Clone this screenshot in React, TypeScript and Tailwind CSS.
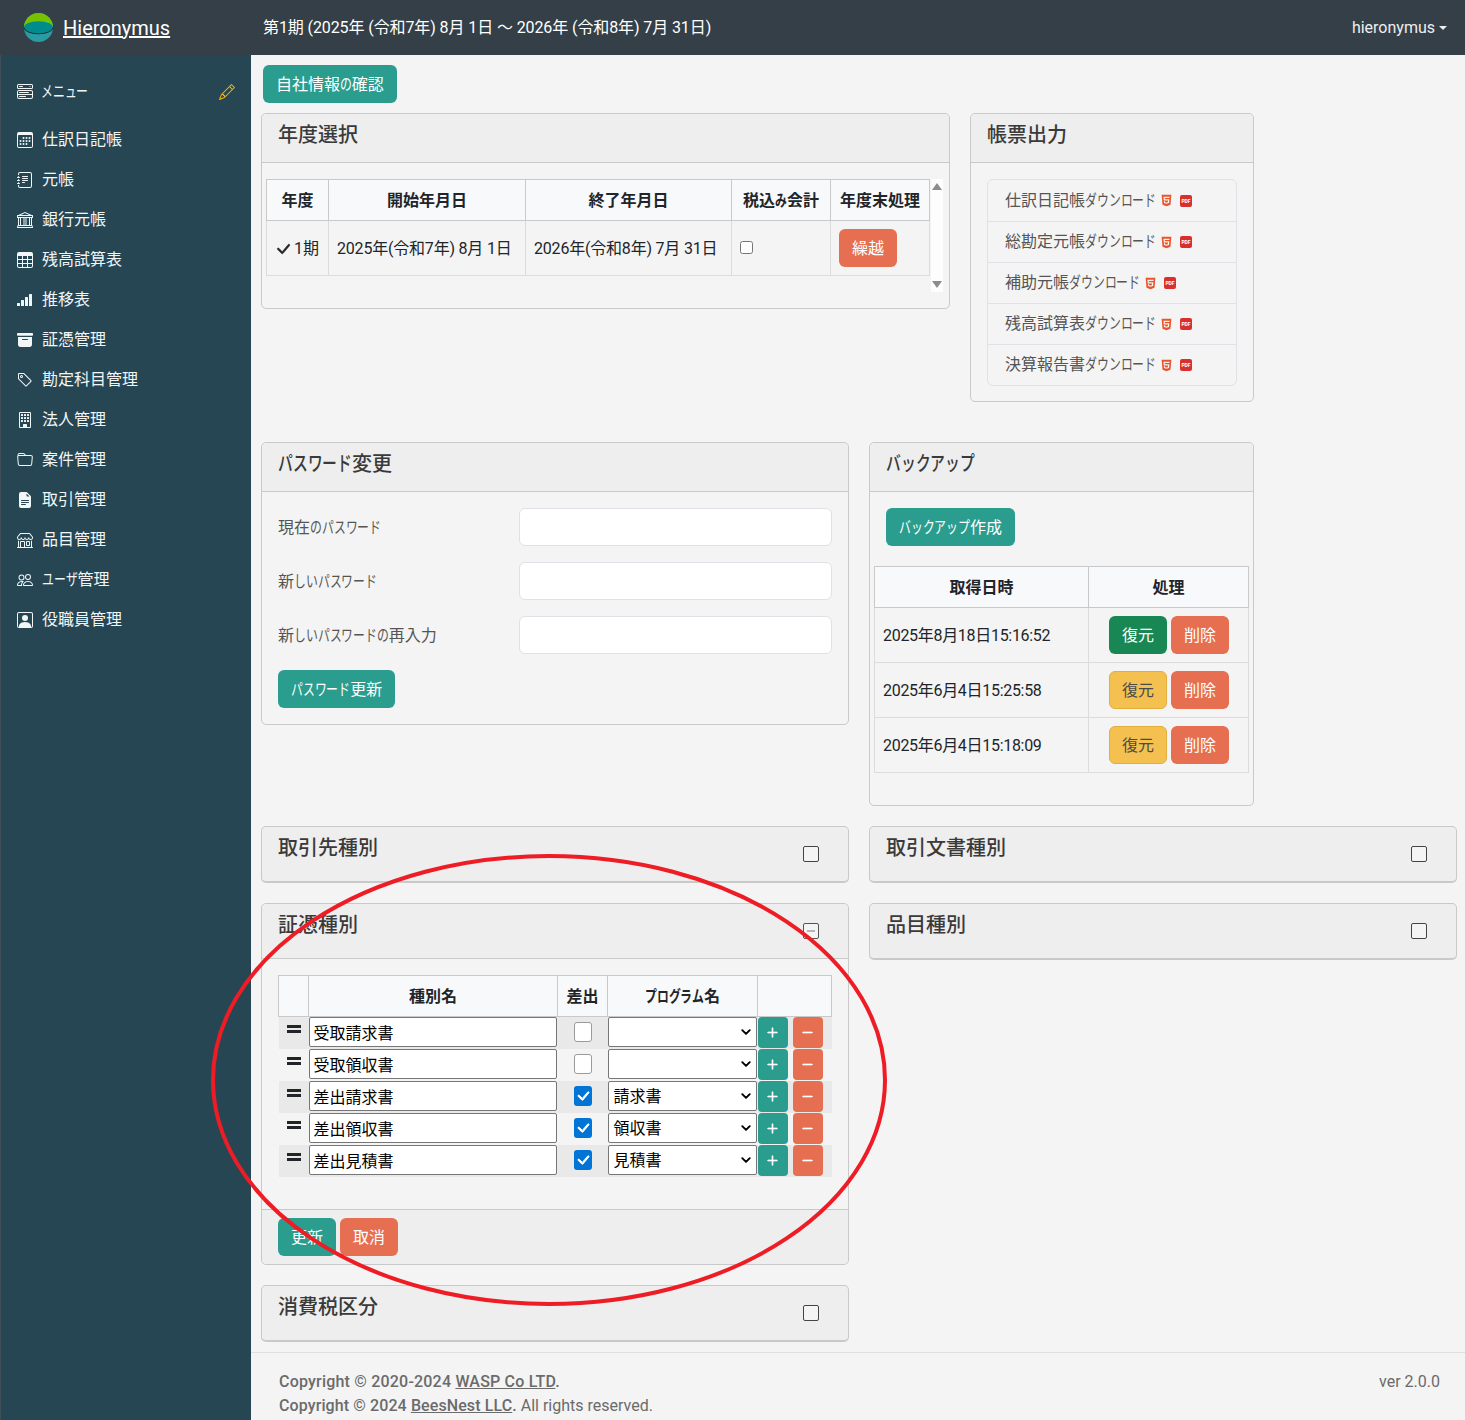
import { ReactNode } from 'react';
import {
  BsArchiveFill, BsBank, BsBuilding, BsCalendar3, BsCheckLg, BsFileEarmarkTextFill, BsFolder,
  BsJournalText, BsMenuButtonWide, BsPencil, BsPeople, BsPersonSquare, BsPlusLg, BsDashLg,
  BsReception4, BsShop, BsTable, BsTag, BsChevronDown,
} from 'react-icons/bs';
import { FaHtml5 } from 'react-icons/fa';

const menu = [
  { label: '仕訳日記帳', Icon: BsCalendar3 },
  { label: '元帳', Icon: BsJournalText },
  { label: '銀行元帳', Icon: BsBank },
  { label: '残高試算表', Icon: BsTable },
  { label: '推移表', Icon: BsReception4 },
  { label: '証憑管理', Icon: BsArchiveFill },
  { label: '勘定科目管理', Icon: BsTag },
  { label: '法人管理', Icon: BsBuilding },
  { label: '案件管理', Icon: BsFolder },
  { label: '取引管理', Icon: BsFileEarmarkTextFill },
  { label: '品目管理', Icon: BsShop },
  { label: 'ユーザ管理', Icon: BsPeople },
  { label: '役職員管理', Icon: BsPersonSquare },
];

const reports = ['仕訳日記帳', '総勘定元帳', '補助元帳', '残高試算表', '決算報告書'];

const backups = [
  { date: '2025年8月18日15:16:52', current: true },
  { date: '2025年6月4日15:25:58', current: false },
  { date: '2025年6月4日15:18:09', current: false },
];

const kinds = [
  { name: '受取請求書', out: false, program: '' },
  { name: '受取領収書', out: false, program: '' },
  { name: '差出請求書', out: true, program: '請求書' },
  { name: '差出領収書', out: true, program: '領収書' },
  { name: '差出見積書', out: true, program: '見積書' },
];

// kana is narrower than kanji in the original font, so squeeze each one
function jp(text: string) {
  return text.split(/([ぁ-んァ-ヶー])/).map((part, i) =>
    i % 2 === 1 ? <span key={i} className="inline-block w-[0.74em] scale-x-[0.74] origin-left">{part}</span> : part
  );
}

function Btn({ color, className = '', children }: { color: 'teal' | 'orange' | 'green' | 'yellow'; className?: string; children: string }) {
  const colors = {
    teal: 'bg-[#2a9d8f] text-white px-[13px]',
    orange: 'bg-[#e76f51] text-white px-[13px]',
    green: 'bg-[#198754] text-white px-[13px]',
    yellow: 'bg-[#f4c150] border border-[#e3ae3e] text-[#4a4a4a] px-[12px]',
  };
  return (
    <button className={`h-[38px] pt-px rounded-md text-[16px] leading-none whitespace-nowrap ${colors[color]} ${className}`}>
      {jp(children)}
    </button>
  );
}

function Card({ title, className = '', headerClass = 'h-[49px]', toggle, children }: { title: string; className?: string; headerClass?: string; toggle?: ReactNode; children?: ReactNode }) {
  return (
    <div className={`border border-[#c9c9c9] rounded-[5px] ${className}`}>
      <div className={`${headerClass} px-4 pt-[7px] flex justify-between bg-[#eeeeee] border-b border-[#c9c9c9] rounded-t-[5px] text-[20px] font-medium leading-[28px] text-[#3a3a3a]`}>
        <span>{jp(title)}</span>
        {toggle}
      </div>
      {children}
    </div>
  );
}

function CollapsedCard({ title, className = '' }: { title: string; className?: string }) {
  return (
    <div className={`h-[57px] px-4 pt-[7px] flex justify-between bg-[#eeeeee] border border-[#c9c9c9] border-b-2 rounded-[5px] text-[20px] font-medium leading-[28px] text-[#3a3a3a] ${className}`}>
      <span>{title}</span>
      <span className="w-4 h-4 mt-[12px] mr-[13px] border border-[#444444] rounded-[2px] bg-[#f4f4f4]" />
    </div>
  );
}

function PasswordRow({ label }: { label: string }) {
  return (
    <div className="flex items-center h-[38px] mb-4">
      <label className="w-[241px] pt-px text-[16px] text-[#555555]">{jp(label)}</label>
      <input className="w-[313px] h-[38px] bg-white border border-[#dee2e6] rounded-md" />
    </div>
  );
}

function PdfIcon() {
  return (
    <span className="w-3 h-3 rounded-[2px] bg-[#d92f2f] text-white text-[5px] font-bold leading-3 text-center">PDF</span>
  );
}

export default function App() {
  return (
    <div className="relative w-[1465px] h-[1420px] flex flex-col overflow-hidden bg-[#f4f4f4] font-['Roboto','Noto_Sans_CJK_JP',sans-serif] text-[16px] text-[#212529]">
      <header className="h-[55px] shrink-0 flex items-center bg-[#343f48] text-white">
        <div className="w-[263px] pl-[23px] flex items-center gap-[9px]">
          <svg viewBox="0 0 32 32" className="w-[31px] h-[31px]">
            <circle cx="16" cy="16" r="15" fill="#2a9aa3" />
            <path d="M1 16a15 15 0 0 1 30 0z" fill="#76c200" />
            <ellipse cx="16" cy="16" rx="15" ry="6.5" fill="#008c8c" />
            <path d="M1 16a15 6.5 0 0 0 30 0" fill="none" stroke="#16323a" strokeWidth="1" />
          </svg>
          <a className="text-[20px] underline">Hieronymus</a>
        </div>
        <div className="tracking-[-0.1px]">第1期 (2025年 (令和7年) 8月 1日 〜 2026年 (令和8年) 7月 31日)</div>
        <div className="ml-auto pr-[18px] flex items-center text-[#eeeeee]">
          hieronymus
          <span className="ml-1 border-x-4 border-x-transparent border-t-4 border-t-[#eeeeee]" />
        </div>
      </header>
      <div className="flex-1 flex min-h-0">
        <aside className="w-[251px] shrink-0 border-l border-[#3f4f57] bg-[#264653] text-[#f2f6f7]">
          <div className="h-[65px] pl-4 pr-[16px] pt-2 flex items-center">
            <BsMenuButtonWide className="w-4 h-4 mr-2 shrink-0" />
            <span>{jp('メニュー')}</span>
            <BsPencil className="ml-auto w-4 h-4 text-[#f0b400]" />
          </div>
          <nav>
            {menu.map(({ label, Icon }) => (
              <div key={label} className="h-10 pl-4 flex items-center gap-[9px]">
                <Icon className="w-4 h-4 shrink-0" />
                <span>{jp(label)}</span>
              </div>
            ))}
          </nav>
        </aside>
        <div className="flex-1 min-w-0 flex flex-col">
          <main className="flex-1 pl-[10px] pr-2 pt-[10px]">
            <Btn color="teal" className="ml-[2px] block">自社情報の確認</Btn>
            <div className="mt-[10px] flex gap-5 items-start">
              <Card title="年度選択" className="w-[689px] h-[196px]">
                <div className="pl-1 pt-4 flex">
                  <table className="w-[664px] h-[97px] border-collapse table-fixed">
                    <thead>
                      <tr className="h-[41px] bg-[#f8f9fa]">
                        <th className="w-[62px] pt-px border border-[#c9c9c9]">年度</th>
                        <th className="w-[197px] pt-px border border-[#c9c9c9]">開始年月日</th>
                        <th className="w-[206px] pt-px border border-[#c9c9c9]">終了年月日</th>
                        <th className="w-[99px] pt-px border border-[#c9c9c9] whitespace-nowrap">{jp('税込み会計')}</th>
                        <th className="pt-px border border-[#c9c9c9] whitespace-nowrap">年度末処理</th>
                      </tr>
                    </thead>
                    <tbody>
                      <tr className="h-[55px]">
                        <td className="border border-[#dcdcdc] pl-2 pt-[2px] whitespace-nowrap">
                          <BsCheckLg className="inline w-[18px] h-[18px] -ml-[1px] mr-[2px] -mt-[2px] stroke-[0.6]" />1期
                        </td>
                        <td className="border border-[#dcdcdc] px-2 pt-[2px] whitespace-nowrap tracking-[-0.2px]">2025年(令和7年) 8月 1日</td>
                        <td className="border border-[#dcdcdc] px-2 pt-[2px] whitespace-nowrap tracking-[-0.2px]">2026年(令和8年) 7月 31日</td>
                        <td className="border border-[#dcdcdc] px-2">
                          <input type="checkbox" readOnly className="block w-[13px] h-[13px] -mt-[2px]" />
                        </td>
                        <td className="border border-[#dcdcdc] px-2">
                          <Btn color="orange">繰越</Btn>
                        </td>
                      </tr>
                    </tbody>
                  </table>
                  <div className="w-[12px] h-[113px] ml-px bg-[#fdfdfd] flex flex-col justify-between items-center py-[4px]">
                    <span className="border-x-[5px] border-x-transparent border-b-[7px] border-b-[#8c8c8c]" />
                    <span className="border-x-[5px] border-x-transparent border-t-[7px] border-t-[#8c8c8c]" />
                  </div>
                </div>
              </Card>
              <Card title="帳票出力" className="w-[284px] h-[289px]">
                <ul className="mx-4 mt-4 border border-[#dee2e6] rounded-md text-[#555555]">
                  {reports.map((r, i) => (
                    <li key={r} className={`h-[41px] pl-[17px] flex items-center ${i > 0 ? 'border-t border-[#dee2e6]' : ''}`}>
                      <span>{jp(r + 'ダウンロード')}</span>
                      <span className="ml-[5px] flex items-center gap-2">
                        <FaHtml5 className="w-[11px] h-[13px] text-[#e9552b]" />
                        <PdfIcon />
                      </span>
                    </li>
                  ))}
                </ul>
              </Card>
            </div>
            <div className="mt-10 flex gap-5 items-start">
              <Card title="パスワード変更" className="w-[588px] h-[283px]">
                <div className="px-4 pt-4">
                  <PasswordRow label="現在のパスワード" />
                  <PasswordRow label="新しいパスワード" />
                  <PasswordRow label="新しいパスワードの再入力" />
                  <Btn color="teal">パスワード更新</Btn>
                </div>
              </Card>
              <Card title="バックアップ" className="w-[385px] h-[364px]">
                <div className="px-4 pt-4">
                  <Btn color="teal">バックアップ作成</Btn>
                </div>
                <table className="ml-1 mt-5 w-[375px] border-collapse table-fixed">
                  <thead>
                    <tr className="h-[41px] bg-[#f8f9fa]">
                      <th className="w-[214px] pt-px border border-[#c9c9c9]">取得日時</th>
                      <th className="pt-px border border-[#c9c9c9]">処理</th>
                    </tr>
                  </thead>
                  <tbody>
                    {backups.map(b => (
                      <tr key={b.date} className="h-[55px]">
                        <td className="border border-[#dcdcdc] px-2 pt-[2px] tracking-[-0.3px]">{b.date}</td>
                        <td className="border border-[#dcdcdc] pl-5 whitespace-nowrap">
                          <Btn color={b.current ? 'green' : 'yellow'}>復元</Btn>
                          <Btn color="orange" className="ml-1">削除</Btn>
                        </td>
                      </tr>
                    ))}
                  </tbody>
                </table>
              </Card>
            </div>
            <div className="mt-5 flex gap-5">
              <CollapsedCard title="取引先種別" className="w-[588px]" />
              <CollapsedCard title="取引文書種別" className="w-[588px]" />
            </div>
            <div className="mt-5 flex gap-5 items-start">
              <div className="w-[588px]">
                <Card
                  title="証憑種別"
                  className="h-[362px] flex flex-col"
                  headerClass="h-[55px]"
                  toggle={
                    <span className="w-4 h-4 mt-[12px] mr-[13px] flex items-center justify-center border border-[#555555] rounded-[2px] bg-[#f4f4f4]">
                      <span className="w-2 h-[2px] bg-[#b5b5b5]" />
                    </span>
                  }
                >
                  <div className="flex-1 px-4 pt-4">
                    <table className="w-[554px] border-collapse table-fixed">
                      <thead>
                        <tr className="h-[41px] bg-[#f8f9fa]">
                          <th className="w-[30px] border border-[#c9c9c9]" />
                          <th className="w-[249px] pt-px border border-[#c9c9c9]">種別名</th>
                          <th className="w-[50px] pt-px border border-[#c9c9c9]">差出</th>
                          <th className="w-[150px] pt-px border border-[#c9c9c9]">{jp('プログラム名')}</th>
                          <th className="border border-[#c9c9c9]" />
                        </tr>
                      </thead>
                      <tbody>
                        {kinds.map((k, i) => (
                          <tr key={k.name} className={`h-8 ${i % 2 === 0 ? 'bg-[#e9e9e9]' : 'bg-[#f4f4f4]'}`}>
                            <td className="p-0 align-top">
                              <span className="mt-2 mx-auto w-[14px] h-2 block border-y-[3px] border-[#212529]" />
                            </td>
                            <td className="p-0 pr-px align-top">
                              <input readOnly value={k.name} className="block w-full h-[30px] px-1 bg-white border border-[#767676] rounded-[2px] text-black" />
                            </td>
                            <td className="p-0">
                              {k.out ? (
                                <span className="mx-auto w-[18px] h-5 -mt-[2px] rounded-[3px] bg-[#0075d7] flex items-center justify-center">
                                  <BsCheckLg className="w-4 h-4 text-white stroke-1" />
                                </span>
                              ) : (
                                <span className="block mx-auto w-[18px] h-5 -mt-[2px] rounded-[3px] bg-white border border-[#9a9a9a]" />
                              )}
                            </td>
                            <td className="p-0 pr-px align-top">
                              <div className="h-[30px] pt-[2px] px-[5px] flex items-center justify-between bg-white border border-[#767676] rounded-[2px] text-black">
                                {k.program}
                                <BsChevronDown className="ml-auto -mt-[2px] w-[10px] h-[10px] stroke-2" />
                              </div>
                            </td>
                            <td className="p-0 whitespace-nowrap">
                              <span className="flex gap-[5px]">
                                <span className="w-[30px] h-[31px] rounded-[4px] bg-[#2a9d8f] flex items-center justify-center">
                                  <BsPlusLg className="w-[13px] h-[13px] text-white stroke-1" />
                                </span>
                                <span className="w-[30px] h-[31px] rounded-[4px] bg-[#e76f51] flex items-center justify-center">
                                  <BsDashLg className="w-[13px] h-[13px] text-white stroke-1" />
                                </span>
                              </span>
                            </td>
                          </tr>
                        ))}
                      </tbody>
                    </table>
                  </div>
                  <div className="h-[55px] px-4 pt-2 flex gap-1 bg-[#eeeeee] border-t border-[#c9c9c9] rounded-b-[5px]">
                    <Btn color="teal">更新</Btn>
                    <Btn color="orange">取消</Btn>
                  </div>
                </Card>
                <CollapsedCard title="消費税区分" className="mt-5" />
              </div>
              <CollapsedCard title="品目種別" className="w-[588px]" />
            </div>
          </main>
          <footer className="h-[68px] shrink-0 pl-[28px] pr-[25px] pt-[17px] flex justify-between border-t border-[#dfdfdf] leading-[24px] text-[#6b6b6b]">
            <div>
              <div><span className="font-medium tracking-[0.2px]">Copyright © 2020-2024 <span className="underline">WASP Co LTD</span>.</span></div>
              <div><span className="font-medium tracking-[0.1px]">Copyright © 2024 <span className="underline">BeesNest LLC</span>.</span> All rights reserved.</div>
            </div>
            <div>ver 2.0.0</div>
          </footer>
        </div>
      </div>
      <svg viewBox="0 0 1465 1420" className="absolute inset-0 w-[1465px] h-[1420px] pointer-events-none">
        <ellipse cx="549" cy="1080" rx="336" ry="224" fill="none" stroke="#ee1c25" strokeWidth="4" />
      </svg>
    </div>
  );
}
